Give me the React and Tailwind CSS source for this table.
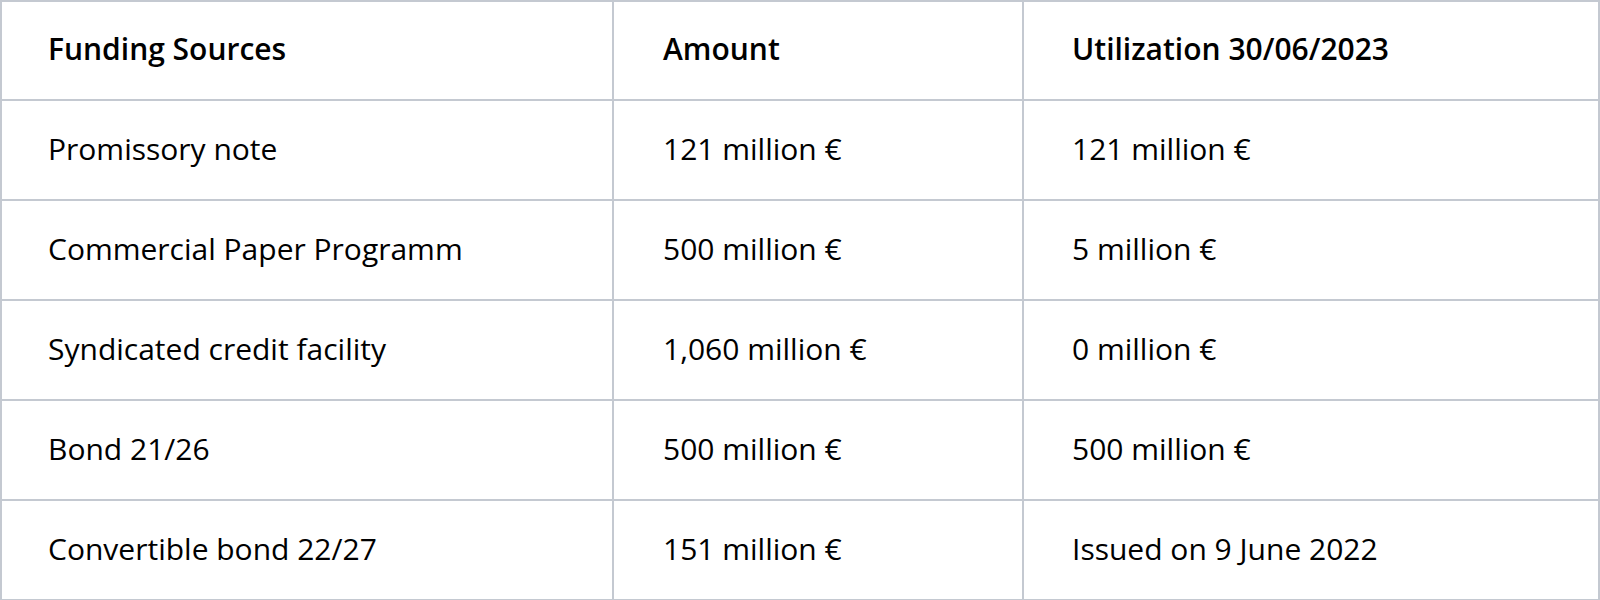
export default function App() {
  const rows = [
    ["Promissory note", "121 million €", "121 million €"],
    ["Commercial Paper Programm", "500 million €", "5 million €"],
    ["Syndicated credit facility", "1,060 million €", "0 million €"],
    ["Bond 21/26", "500 million €", "500 million €"],
    ["Convertible bond 22/27", "151 million €", "Issued on 9 June 2022"],
  ];
  const base = "border-2 border-[#c4c9d1] align-middle";
  const pads = ["pl-[46px]", "pl-[49px]", "pl-[48px]"];
  return (
    <div className="w-[1600px] h-[600px] bg-white text-black" style={{ fontFamily: '"Open Sans", sans-serif' }}>
      <table className="w-full table-fixed border-collapse text-[30px] leading-none">
        <colgroup>
          <col className="w-[612px]" />
          <col className="w-[410px]" />
          <col />
        </colgroup>
        <thead>
          <tr>
            {["Funding Sources", "Amount", "Utilization 30/06/2023"].map((h, i) => (
              <th key={h} className={`${base} ${pads[i]} h-[99px] pb-[4px] text-left font-semibold`}>{h}</th>
            ))}
          </tr>
        </thead>
        <tbody>
          {rows.map((r) => (
            <tr key={r[0]}>
              {r.map((c, i) => (
                <td key={i} className={`${base} ${pads[i]} h-[100px] pb-[3px]`}>{c}</td>
              ))}
            </tr>
          ))}
        </tbody>
      </table>
    </div>
  );
}
